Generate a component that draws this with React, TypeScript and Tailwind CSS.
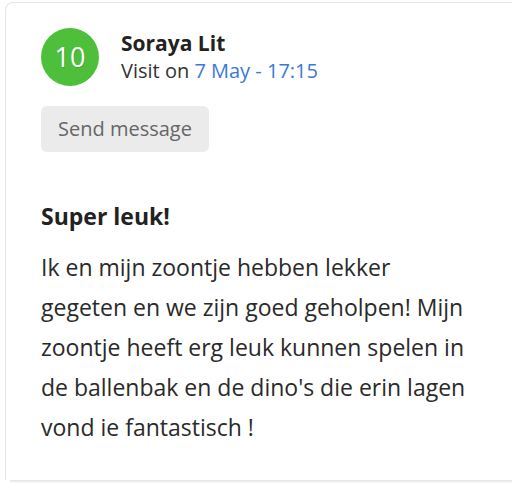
export default function App() {
  return (
    <div className="h-[490px] w-[512px] overflow-hidden bg-white pl-[5px] pt-[2px] font-['Open_Sans',sans-serif]">
      <div className="h-[478px] rounded-tl-lg border-l border-t border-[#e6e6e6] bg-white pl-[35px] pt-[25px] shadow-[4px_3px_2px_-1px_rgba(0,0,0,0.10)]">
        {/* ── Header ── */}
        <div className="flex items-center gap-[22px]">
          <div className="flex h-[58px] w-[58px] shrink-0 items-center justify-center rounded-full bg-[#4ebf3a] text-[27px] text-white [text-shadow:1px_1px_0_rgba(0,0,0,0.15)]">
            10
          </div>
          <div className="flex flex-col">
            <span className="text-[21px] font-bold leading-[27px] text-[#222]">Soraya Lit</span>
            <span className="text-[20px] leading-[27px] text-[#333]">
              Visit on <span className="text-[#3b78d8]">7 May - 17:15</span>
            </span>
          </div>
        </div>

        <button
          type="button"
          className="mt-[20px] h-[46px] w-[168px] rounded-md bg-[#ebebeb] text-[20px] text-[#666]"
        >
          Send message
        </button>

        {/* ── Review ── */}
        <p className="mt-[49px] text-[23px] font-bold leading-[30px] text-[#222]">Super leuk!</p>
        <p className="mt-[16px] w-[436px] text-[23px] leading-[40px] text-[#2a2a2a]">
          Ik en mijn zoontje hebben lekker gegeten en we zijn goed geholpen! Mijn zoontje heeft erg
          leuk kunnen spelen in de ballenbak en de dino's die erin lagen vond ie fantastisch !
        </p>
      </div>
    </div>
  );
}
